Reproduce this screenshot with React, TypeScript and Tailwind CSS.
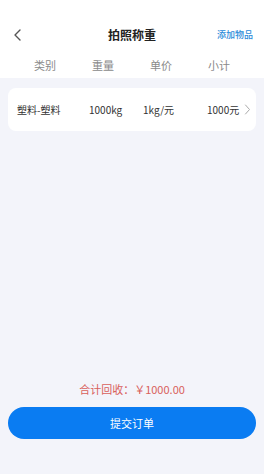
import React from "react";

export default function App() {
  return (
    <div
      className="flex h-[474px] w-[264px] flex-col bg-[#f3f4fa]"
      style={{ fontFamily: '"Noto Sans CJK SC", "Noto Sans", sans-serif' }}
    >
      <div className="bg-white pt-[13px]">
        <div className="relative flex h-[44px] items-center justify-center">
          <svg
            className="absolute left-[12px] top-[15px]"
            width="12"
            height="14"
            viewBox="0 0 12 14"
            fill="none"
          >
            <path d="M8 2 L3 7 L8 12" stroke="#555" strokeWidth="1.4" strokeLinecap="round" strokeLinejoin="round" />
          </svg>
          <span className="text-[12px] font-bold text-[#222]">拍照称重</span>
          <span className="absolute right-[11px] top-[15px] text-[9px] font-medium text-[#2a8ad9]">添加物品</span>
        </div>
        <div className="grid h-[16px] grid-cols-4 px-[16px] mb-[5px] text-[11px] leading-[16px] text-[#8a8a8a]">
          <span className="text-center">类别</span>
          <span className="text-center">重量</span>
          <span className="text-center">单价</span>
          <span className="text-center">小计</span>
        </div>
      </div>
      <div className="mx-[8px] mt-[10px] flex h-[43px] items-center rounded-[8px] bg-white pl-[9px] text-[10px] text-[#333]">
        <span className="w-[72px]">塑料-塑料</span>
        <span className="w-[54px]">1000kg</span>
        <span className="w-[64px]">1kg/元</span>
        <span>1000元</span>
        <svg className="ml-[5px]" width="7" height="11" viewBox="0 0 7 11" fill="none">
          <path d="M1.5 1 L5.5 5.5 L1.5 10" stroke="#aaa" strokeWidth="1" strokeLinecap="round" strokeLinejoin="round" />
        </svg>
      </div>
      <div className="flex-1" />
      <div className="text-center text-[11px] leading-[16px] text-[#d9605a]">合计回收：￥1000.00</div>
      <button className="mx-[8px] mt-[10px] mb-[35px] flex h-[32px] items-center justify-center rounded-full bg-[#0a7cf2] text-[11px] text-white">
        提交订单
      </button>
    </div>
  );
}
